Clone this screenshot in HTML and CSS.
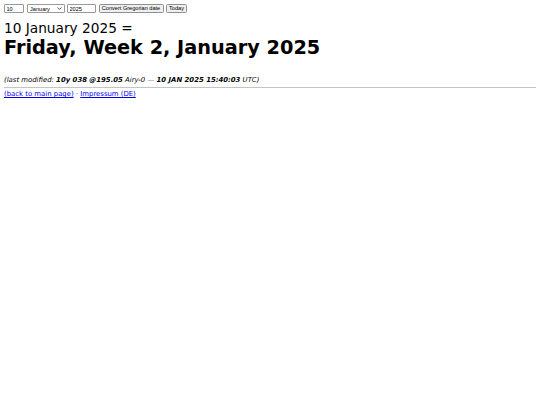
FILE: index.html
```html
<!DOCTYPE html>
<html lang="en">
<head>
<meta charset="utf-8">
<title>10 January 2025 = Friday, Week 2, January 2025</title>
<link rel="stylesheet" href="styles.css">
</head>
<body>
<form class="convert">
  <input class="field day" type="text" value="10">
  <span class="select-wrap">
    <select class="field month">
      <option>January</option>
    </select>
    <svg class="chevron" viewBox="0 0 8 5" width="5" height="3" aria-hidden="true"><path d="M0.8 0.8 L4 4 L7.2 0.8" fill="none" stroke="#222" stroke-width="1.3"/></svg>
  </span>
  <input class="field year" type="text" value="2025">
  <button class="btn convert-btn" type="button">Convert Gregorian date</button>
  <button class="btn today-btn" type="button">Today</button>
</form>
<h2 class="date">10 January 2025 =</h2>
<h1 class="result">Friday, Week 2, January 2025</h1>
<p class="modified">(last modified: <b>10y 038 @195.05</b> Airy-0 — <b>10 JAN 2025 15:40:03</b> UTC)</p>
<hr class="rule">
<p class="links"><a href="#">(back to main page)</a> <span class="sep">·</span> <a href="#">Impressum (DE)</a></p>
</body>
</html>
```
FILE: styles.css
```css
html, body {
  background: #fff;
}
body {
  margin: 4px;
  font-family: "DejaVu Sans", Verdana, sans-serif;
  color: #000;
}
.convert {
  display: flex;
  align-items: center;
  gap: 2.5px;
  height: 9px;
  margin: 0;
}
.field, .btn {
  box-sizing: border-box;
  height: 9px;
  font-family: "Liberation Sans", Arial, sans-serif;
  font-size: 5.6px;
  margin: 0;
  color: #000;
}
.field {
  border: 0.5px solid #9a9a9a;
  border-radius: 1px;
  padding: 0 1.5px;
  background: #fff;
}
.day { width: 20px; }
.select-wrap {
  position: relative;
  display: block;
  width: 38px;
  height: 9px;
}
.month {
  appearance: none;
  -webkit-appearance: none;
  width: 38px;
  padding: 0 0 0 2.5px;
  display: block;
}
.chevron {
  position: absolute;
  right: 3px;
  top: 3px;
  pointer-events: none;
}
.year { width: 29px; }
.btn {
  border: 0.5px solid #8f8f8f;
  border-radius: 1.5px;
  background: #efefef;
  padding: 0 3px;
  line-height: 1;
}
.convert-btn { width: 65px; padding: 0; }
.today-btn { width: 21px; padding: 0; }
.date {
  font-size: 13.7px;
  font-weight: normal;
  margin: 6.5px 0 0;
  line-height: 16px;
}
.result {
  font-size: 19.3px;
  font-weight: bold;
  margin: 1px 0 0;
  line-height: 22.5px;
}
.modified {
  font-size: 6.9px;
  font-style: italic;
  line-height: 8px;
  margin: 16.5px 0 0;
}
.modified b {
  font-weight: bold;
}
.rule {
  border: 0;
  border-top: 1px solid #c4c4c4;
  margin: 3px 0 0;
  height: 0;
}
.links {
  font-size: 6.9px;
  line-height: 8px;
  margin: 2.8px 0 0;
}
.links a {
  color: #0000ee;
}
.sep {
  color: #555;
}
```
